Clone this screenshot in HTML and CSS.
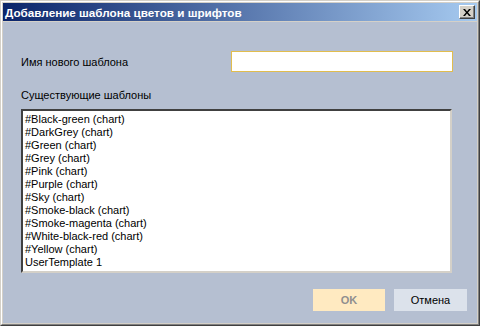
FILE: index.html
```html
<!DOCTYPE html>
<html>
<head>
<meta charset="utf-8">
<link rel="stylesheet" href="styles.css">
</head>
<body>
<div class="window">
  <div class="frame">
    <div class="titlebar">
      <span class="title">Добавление шаблона цветов и шрифтов</span>
      <button class="close" type="button">
        <svg width="8" height="7" viewBox="0 0 8 7"><path d="M0 0h2l2 2.5L6 0h2L5 3.5 8 7H6L4 4.5 2 7H0l3-3.5z" fill="#000"/></svg>
      </button>
    </div>
    <div class="content">
      <div class="name-row">
        <span class="label">Имя нового шаблона</span>
        <div class="input"></div>
      </div>
      <div class="label list-label">Существующие шаблоны</div>
      <div class="list">
        <div class="item">#Black-green (chart)</div>
        <div class="item">#DarkGrey (chart)</div>
        <div class="item">#Green (chart)</div>
        <div class="item">#Grey (chart)</div>
        <div class="item">#Pink (chart)</div>
        <div class="item">#Purple (chart)</div>
        <div class="item">#Sky (chart)</div>
        <div class="item">#Smoke-black (chart)</div>
        <div class="item">#Smoke-magenta (chart)</div>
        <div class="item">#White-black-red (chart)</div>
        <div class="item">#Yellow (chart)</div>
        <div class="item">UserTemplate 1</div>
      </div>
      <div class="buttons">
        <button class="btn ok" type="button">OK</button>
        <button class="btn cancel" type="button">Отмена</button>
      </div>
    </div>
  </div>
</div>
</body>
</html>
```
FILE: styles.css
```css
html, body {
  margin: 0;
  padding: 0;
  width: 480px;
  height: 326px;
  overflow: hidden;
  background: #d4d0c8;
}
.window {
  box-sizing: border-box;
  width: 480px;
  height: 326px;
  border: 1px solid;
  border-color: #d4d0c8 #404040 #404040 #d4d0c8;
}
.frame {
  box-sizing: border-box;
  height: 100%;
  border: 1px solid;
  border-color: #ffffff #808080 #808080 #ffffff;
  padding: 1px;
  background: #d4d0c8;
  display: flex;
  flex-direction: column;
}
.titlebar {
  height: 18px;
  flex: none;
  background: linear-gradient(to right, #0a246a, #a6caf0);
  display: flex;
  align-items: center;
  padding: 0 2px 0 2px;
}
.title {
  flex: 1;
  color: #fff;
  font-family: "Liberation Sans", Arial, sans-serif;
  font-weight: bold;
  font-size: 11.7px;
}
.close {
  box-sizing: border-box;
  width: 16px;
  height: 14px;
  padding: 0;
  margin: 0;
  background: #d4d0c8;
  border: 1px solid;
  border-color: #ffffff #404040 #404040 #ffffff;
  box-shadow: inset -1px -1px 0 #808080;
  display: flex;
  align-items: center;
  justify-content: center;
}
.close svg { display: block; }
.content {
  flex: 1;
  background: #b5bfd1;
  margin-top: 1px;
  padding: 29px 0 0 18px;
  display: flex;
  flex-direction: column;
  font-family: "Liberation Sans", Arial, sans-serif;
  font-size: 11px;
  color: #000;
}
.name-row {
  display: flex;
  align-items: center;
  height: 21px;
}
.label {
  flex: none;
}
.name-row .label {
  width: 210px;
}
.input {
  box-sizing: border-box;
  width: 222px;
  height: 21px;
  background: #fff;
  border: 1px solid #e1bd4e;
}
.list-label {
  margin-top: 17px;
  line-height: 13px;
}
.list {
  box-sizing: border-box;
  margin-top: 7px;
  width: 431px;
  height: 164px;
  background: #fff;
  border: 2px solid;
  border-color: #404040 #d4d0c8 #d4d0c8 #404040;
  padding: 2px 2px;
}
.item {
  line-height: 13px;
  height: 13px;
  white-space: nowrap;
}
.buttons {
  display: flex;
  justify-content: flex-end;
  gap: 9px;
  margin-top: 16px;
  padding-right: 10px;
}
.btn {
  box-sizing: border-box;
  height: 22px;
  width: 72px;
  border: none;
  padding: 0;
  font-family: "Liberation Sans", Arial, sans-serif;
  font-size: 11px;
}
.ok {
  background: #ffeac1;
  color: #8f8f8f;
  font-weight: bold;
}
.cancel {
  width: 73px;
  background: #dce2eb;
  color: #000;
}
```
